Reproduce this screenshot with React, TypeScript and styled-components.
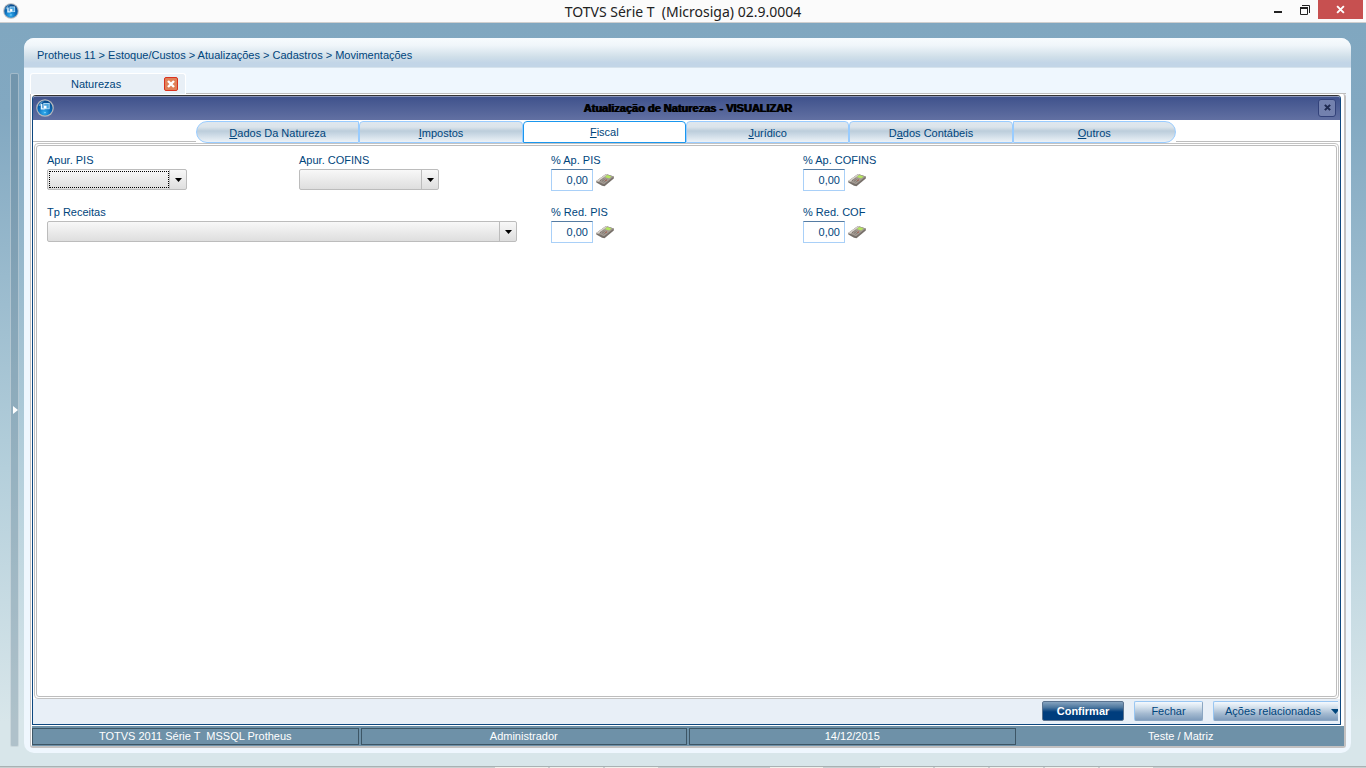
import React from 'react';
import styled, { createGlobalStyle, css } from 'styled-components';

const navy = '#00457c';

const Global = createGlobalStyle`
  *, *::before, *::after { box-sizing: border-box; }
  body {
    margin: 0;
    font-family: 'Liberation Sans', Arial, sans-serif;
    font-size: 11px;
    line-height: 16px;
    color: ${navy};
  }
  button, input, select { font: inherit; color: inherit; margin: 0; padding: 0; }
`;

const Page = styled.div`
  min-height: 100vh;
  display: flex;
  flex-direction: column;
  background: #d8e6ea;
`;

const TitleBar = styled.header`
  display: grid;
  grid-template-columns: 1fr auto 1fr;
  height: 23px;
  flex: none;
  padding: 0 3px;
  background: #fbfbfb;
  border-bottom: 1px solid #cfcfcf;
`;

const AppIcon = styled.div`
  display: flex;
  padding-top: 3px;
`;

const AppTitle = styled.h1`
  margin: 0;
  font: 400 14px/23px 'Noto Sans', 'Open Sans', sans-serif;
  color: #222;
  white-space: pre;
`;

const WindowButtons = styled.div`
  display: flex;
  justify-content: flex-end;
  align-items: flex-start;
`;

const WindowButton = styled.button<{ $close?: boolean }>`
  display: grid;
  place-items: center;
  width: ${p => (p.$close ? 45 : 27)}px;
  height: 19px;
  border: 0;
  background: ${p => (p.$close ? '#c75050' : 'transparent')};
`;

const Desktop = styled.div`
  flex: 1;
  display: flex;
  padding: 15px 15px 13px 10px;
  background: linear-gradient(#80a7c0 0, #82a8c1 12%, #b4cfdb 60%, #d8e6ea 94%);
`;

const Splitter = styled.button`
  flex: none;
  display: flex;
  align-items: center;
  justify-content: flex-end;
  width: 9px;
  margin: 35px 5px 6px 0;
  border: 1px solid rgba(255, 255, 255, 0.35);
  border-radius: 2px;
  background: rgba(80, 110, 130, 0.3);
`;

const Panel = styled.main`
  flex: 1;
  min-width: 0;
  display: flex;
  flex-direction: column;
  padding-bottom: 5px;
  border-radius: 10px;
  background: #eff7fe;
  overflow: hidden;
`;

const Breadcrumb = styled.nav`
  height: 30px;
  flex: none;
  padding: 9px 13px 0;
  line-height: 16px;
  background: linear-gradient(#f7fbfe 0, #f0f6fa 25%, #d0dfe9 65%, #c2d5e7 85%, #c2d5e7 100%);
  border-bottom: 1px solid #d5e2ec;
`;

const PageTabs = styled.div`
  display: flex;
  padding: 5px 5px 0 6px;
`;

const PageTab = styled.div`
  display: flex;
  justify-content: space-between;
  align-items: center;
  width: 156px;
  height: 21px;
  padding: 0 7px 0 40px;
  border: 1px solid #fff;
  border-bottom: 0;
  border-radius: 3px 3px 0 0;
  background: #e8eff6;
`;

const TabClose = styled.button`
  display: grid;
  place-items: center;
  width: 14px;
  height: 14px;
  border: 1px solid #d9321f;
  border-radius: 2px;
  background: #e08058;
`;

const TabRule = styled.div`
  flex: 1;
  border-bottom: 1px solid #bdbdbd;
`;

const Frame = styled.section`
  flex: 1;
  display: flex;
  flex-direction: column;
  margin: 0 5px 0 6px;
  padding: 1px 0 0 1px;
  border: solid #c3c1c1;
  border-width: 0 2px 2px 1px;
  border-radius: 0 3px 3px 3px;
  background: #fff;
`;

const Dialog = styled.section`
  flex: 1;
  display: flex;
  flex-direction: column;
  margin-right: 3px;
  border: 1px solid #0d477f;
  border-top-color: #333;
  border-radius: 4px 4px 0 0;
  overflow: hidden;
`;

const DialogBar = styled.div`
  display: grid;
  grid-template-columns: 24px 1fr 24px;
  align-items: center;
  height: 24px;
  padding: 0 1px 2px 3px;
  border-top: 1px solid #8994b8;
  background: linear-gradient(#3f528c, #6270a2);
`;

const DialogTitle = styled.h2`
  margin: 0;
  text-align: center;
  font-size: 11px;
  line-height: 16px;
  font-weight: 700;
  color: #000;
  text-shadow: 1px 0 #000;
`;

const DialogClose = styled.button`
  justify-self: center;
  display: grid;
  place-items: center;
  width: 18px;
  height: 18px;
  border: 1px solid #33427a;
  border-radius: 3px;
  background: #7381ae;
`;

const TabStrip = styled.div`
  display: grid;
  grid-template-columns: minmax(0, 163fr) minmax(0, 980fr) minmax(0, 164fr);
  height: 23px;
  padding-top: 1px;
`;

const StripRule = styled.div`
  margin-bottom: 1px;
  border-bottom: 1px solid #bdbdbd;
`;

const Tabs = styled.div`
  display: flex;
`;

const Tab = styled.button<{ $active?: boolean }>`
  flex: 1;
  height: 22px;
  padding-top: 2px;
  line-height: 16px;
  border: 1px solid #99ccff;
  border-radius: 4px 4px 0 0;
  background: linear-gradient(#dfe7ee 0, #dbe4eb 25%, #bccddb 45%, #c8d7e3 60%, #ecf2f7 100%);
  &:first-child { border-radius: 12px 0 0 12px; }
  &:last-child { border-radius: 0 12px 12px 0; }
  ${p => p.$active && css`
    padding-top: 0;
    border-color: #1a97ee;
    background: #fff;
  `}
`;

const Content = styled.div`
  flex: 1;
  margin: 0 1px;
  padding: 1px;
  border: 1px solid #c3c3c3;
  border-radius: 4px;
  background: #fff;
`;

const Form = styled.form`
  height: 100%;
  display: grid;
  grid-template-columns: repeat(4, 252px);
  align-content: start;
  row-gap: 13px;
  padding: 6px 10px;
  border: 1px solid #bdbdbd;
  border-radius: 3px;
`;

const Field = styled.div<{ $wide?: boolean }>`
  grid-column: span ${p => (p.$wide ? 2 : 1)};
`;

const Label = styled.label`
  display: block;
  margin-bottom: 1px;
  line-height: 16px;
`;

const Combo = styled.div<{ $wide?: boolean }>`
  display: grid;
  grid-template-columns: 1fr 17px;
  width: ${p => (p.$wide ? 470 : 140)}px;
  height: 21px;
  border: 1px solid #bcbcbc;
  border-radius: 2px;
  background: linear-gradient(#f8f8f8, #dedede);
`;

const ComboSelect = styled.select`
  grid-area: 1 / 1 / 2 / 3;
  width: 100%;
  appearance: none;
  border: 0;
  background: transparent;
  outline: 0;
`;

const ComboFocus = styled.span`
  grid-area: 1 / 1 / 2 / 2;
  margin: 1px 0 1px 1px;
  border: 1px dotted #000;
  pointer-events: none;
`;

const ComboArrow = styled.span`
  grid-area: 1 / 2 / 2 / 3;
  display: grid;
  place-items: center;
  border-left: 1px solid #bcbcbc;
  pointer-events: none;
`;

const NumberRow = styled.div`
  display: flex;
  align-items: center;
  gap: 3px;
`;

const NumberInput = styled.input`
  width: 42px;
  height: 22px;
  padding: 0 4px;
  text-align: right;
  border: 1px solid #a9d0f8;
  border-top-color: #557ca3;
  background: #fff;
`;

const CalcButton = styled.button`
  display: flex;
  border: 0;
  background: none;
`;

const Footer = styled.div`
  display: flex;
  justify-content: flex-end;
  gap: 10px;
  height: 25px;
  flex: none;
  padding: 2px 2px 0;
  background: #e8eff7;
`;

const ActionButton = styled.button<{ $primary?: boolean; $width: number }>`
  display: flex;
  justify-content: center;
  align-items: center;
  gap: 10px;
  width: ${p => p.$width}px;
  height: 20px;
  border: 1px solid #8ba6c2;
  border-top-color: #99c6f2;
  border-left-color: #99c6f2;
  border-radius: 2px;
  background: linear-gradient(#f4f9fe 0, #d3e0ec 30%, #a3b9d0 65%, #7f9cbc 100%);
  ${p => p.$primary && css`
    border-color: #5a7390;
    font-weight: 700;
    color: #fff;
    background: linear-gradient(#86a3bf 0, #4d779f 30%, #003d7d 55%, #003d7d 100%);
  `}
`;

const RelatedButton = styled(ActionButton)`
  justify-content: flex-end;
  border-right: 0;
  border-radius: 2px 0 0 2px;
`;

const StatusBar = styled.footer`
  display: flex;
  gap: 2px;
  height: 20px;
  flex: none;
  margin-top: 1px;
  padding: 2px 0 1px;
  background: #6e91a8;
`;

const StatusCell = styled.div<{ $plain?: boolean }>`
  flex: 1;
  border: 1px solid ${p => (p.$plain ? 'transparent' : '#3d5666')};
  text-align: center;
  line-height: 15px;
  color: #fff;
  white-space: pre;
`;

const TaskStrip = styled.div`
  display: flex;
  gap: 2px;
  height: 2px;
  padding-left: 495px;
  border-top: 1px solid #a9b2b3;
  background: #c8cfd0;
`;

const TaskSlot = styled.span<{ $filled: boolean }>`
  width: 53px;
  height: 1px;
  background: ${p => (p.$filled ? '#f1f1ec' : 'transparent')};
`;

function Logo({ size }: { size: number }) {
  return (
    <svg width={size} height={size} viewBox="0 0 18 18" aria-hidden="true">
      <defs>
        <radialGradient id={`orb${size}`} cx="45%" cy="80%" r="75%">
          <stop offset="0" stopColor="#35b0f0" />
          <stop offset="0.55" stopColor="#0a6cba" />
          <stop offset="1" stopColor="#084a8c" />
        </radialGradient>
      </defs>
      <circle cx="9" cy="9" r="8.8" fill="#b4b8bd" />
      <circle cx="9" cy="9" r="7.6" fill={`url(#orb${size})`} />
      <path d="M2.500 7Q4 2.500 8 2Q5 4 4.500 7Z" fill="#8fcdf2" opacity="0.6" />
      <path d="M4.800 5h1.600v4.200h2.200v1.400H4.800Z" fill="#e8f6ff" />
      <rect x="7.800" y="4.400" width="5.400" height="5.400" fill="#4aa6e0" stroke="#c4e6fa" strokeWidth="0.800" />
      <path d="M8 9.600V6.800H10.500V9.600Z" fill="#fff" />
      <path d="M8 13h2L9 14.500Z" fill="#9adcff" />
    </svg>
  );
}

function Cross({ size, color, width }: { size: number; color: string; width: number }) {
  return (
    <svg width={size} height={size} viewBox="0 0 8 8" aria-hidden="true">
      <path d="M1 1L7 7M7 1L1 7" stroke={color} strokeWidth={width} />
    </svg>
  );
}

function Arrow() {
  return (
    <svg width="7" height="4" viewBox="0 0 7 4" aria-hidden="true">
      <path d="M0 0H7L3.500 4Z" fill="#000" />
    </svg>
  );
}

function Calculator() {
  return (
    <svg width="18" height="14" viewBox="0 0 18 14" aria-hidden="true">
      <path d="M0.300 9.500L0.300 8L10 1L17.800 3.500V5.500L8.500 13.200L6 12.800Z" fill="#77706a" />
      <path d="M0.300 8L10 1L17.800 3.500L8 11.300Z" fill="#a39b93" />
      <path d="M0.300 8L10 1L11.500 1.500L2.300 8.700Z" fill="#d6d1cb" />
      <path d="M8.800 4L11.300 2.100L15.500 3.500L13.200 5.500Z" fill="#b4e65f" />
      <path d="M4 7.700L7.500 5.200M5.800 8.500L9.200 5.900M7.600 9.300L10.800 6.700" stroke="#6f6760" strokeWidth="0.900" strokeDasharray="1.300 0.500" />
      <path d="M9.500 7.800L10.800 6.700" stroke="#b0604f" strokeWidth="1.100" />
    </svg>
  );
}

function ComboField({ id, label, wide, focused }: { id: string; label: string; wide?: boolean; focused?: boolean }) {
  return (
    <Field $wide={wide}>
      <Label htmlFor={id}>{label}</Label>
      <Combo $wide={wide}>
        <ComboSelect id={id} defaultValue="">
          <option value="" />
        </ComboSelect>
        {focused && <ComboFocus />}
        <ComboArrow><Arrow /></ComboArrow>
      </Combo>
    </Field>
  );
}

function NumberField({ id, label }: { id: string; label: string }) {
  return (
    <Field>
      <Label htmlFor={id}>{label}</Label>
      <NumberRow>
        <NumberInput id={id} defaultValue="0,00" />
        <CalcButton type="button" aria-label="Calculadora"><Calculator /></CalcButton>
      </NumberRow>
    </Field>
  );
}

const tabs: [string, string, string][] = [
  ['', 'D', 'ados Da Natureza'],
  ['', 'I', 'mpostos'],
  ['', 'F', 'iscal'],
  ['', 'J', 'urídico'],
  ['D', 'a', 'dos Contábeis'],
  ['', 'O', 'utros'],
];

const taskSlots = [true, true, true, false, false, true, false, true, true, true, true, true];

export default function App() {
  return (
    <Page>
      <Global />
      <TitleBar>
        <AppIcon><Logo size={16} /></AppIcon>
        <AppTitle>{'TOTVS Série T  (Microsiga) 02.9.0004'}</AppTitle>
        <WindowButtons>
          <WindowButton aria-label="Minimizar">
            <svg width="8" height="8" viewBox="0 0 8 8"><path d="M0 5H8V7H0Z" fill="#222" /></svg>
          </WindowButton>
          <WindowButton aria-label="Restaurar">
            <svg width="10" height="10" viewBox="0 0 10 10" fill="none" stroke="#222">
              <path d="M0 2.500H8M0.500 2V9.500H7.500V2M0 3.500H8M2 0.500H9.500V8" />
            </svg>
          </WindowButton>
          <WindowButton $close aria-label="Sair"><Cross size={9} color="#fff" width={1.7} /></WindowButton>
        </WindowButtons>
      </TitleBar>
      <Desktop>
        <Splitter aria-label="Expandir menu">
          <svg width="5" height="8" viewBox="0 0 5 8"><path d="M0 0L5 4L0 8Z" fill="#fff" /></svg>
        </Splitter>
        <Panel>
          <Breadcrumb>{'Protheus 11 > Estoque/Custos > Atualizações > Cadastros > Movimentações'}</Breadcrumb>
          <PageTabs>
            <PageTab>
              Naturezas
              <TabClose aria-label="Fechar aba"><Cross size={8} color="#fff" width={2.4} /></TabClose>
            </PageTab>
            <TabRule />
          </PageTabs>
          <Frame>
            <Dialog>
              <DialogBar>
                <Logo size={18} />
                <DialogTitle>Atualização de Naturezas - VISUALIZAR</DialogTitle>
                <DialogClose aria-label="Fechar janela"><Cross size={7} color="#1f2a50" width={2.4} /></DialogClose>
              </DialogBar>
              <TabStrip>
                <StripRule />
                <Tabs role="tablist">
                  {tabs.map(([before, key, after], i) => (
                    <Tab key={after} type="button" role="tab" aria-selected={i === 2} $active={i === 2}>
                      {before}<u>{key}</u>{after}
                    </Tab>
                  ))}
                </Tabs>
                <StripRule />
              </TabStrip>
              <Content>
                <Form>
                  <ComboField id="apur-pis" label="Apur. PIS" focused />
                  <ComboField id="apur-cofins" label="Apur. COFINS" />
                  <NumberField id="ap-pis" label="% Ap. PIS" />
                  <NumberField id="ap-cofins" label="% Ap. COFINS" />
                  <ComboField id="tp-receitas" label="Tp Receitas" wide />
                  <NumberField id="red-pis" label="% Red. PIS" />
                  <NumberField id="red-cof" label="% Red. COF" />
                </Form>
              </Content>
              <Footer>
                <ActionButton type="button" $primary $width={82}>Confirmar</ActionButton>
                <ActionButton type="button" $width={69}>Fechar</ActionButton>
                <RelatedButton type="button" $width={125}>
                  Ações relacionadas
                  <svg width="7" height="5" viewBox="0 0 7 5"><path d="M0 0H7V2L4.500 5Z" fill={navy} /></svg>
                </RelatedButton>
              </Footer>
            </Dialog>
            <StatusBar>
              <StatusCell>{'TOTVS 2011 Série T  MSSQL Protheus'}</StatusCell>
              <StatusCell>Administrador</StatusCell>
              <StatusCell>14/12/2015</StatusCell>
              <StatusCell $plain>Teste / Matriz</StatusCell>
            </StatusBar>
          </Frame>
        </Panel>
      </Desktop>
      <TaskStrip>
        {taskSlots.map((filled, i) => <TaskSlot key={i} $filled={filled} />)}
      </TaskStrip>
    </Page>
  );
}
